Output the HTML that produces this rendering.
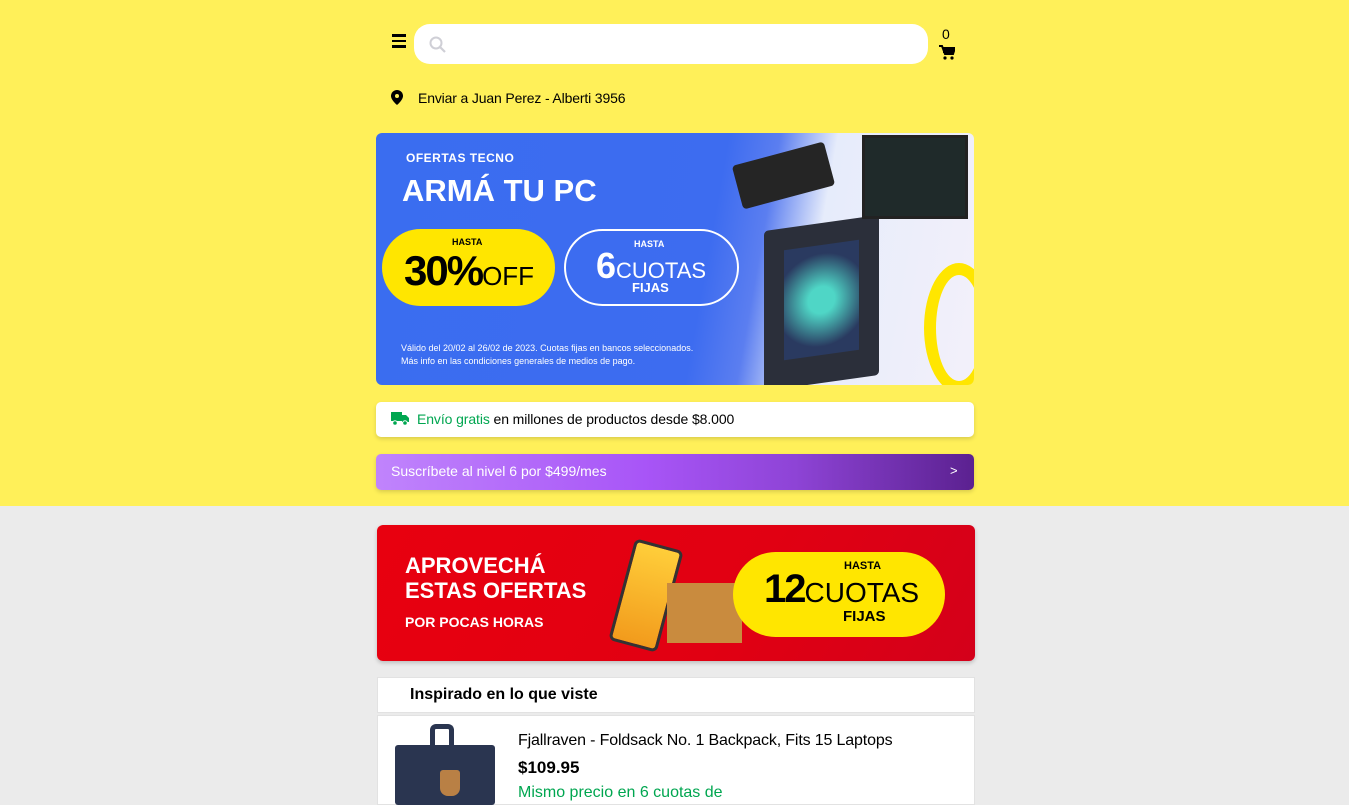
<!DOCTYPE html>
<html><head><meta charset="utf-8"><style>
*{box-sizing:border-box;margin:0;padding:0}
body{width:1349px;height:800px;overflow:hidden;background:#ebebeb;font-family:"Liberation Sans",sans-serif;position:relative}
.top{position:absolute;left:0;top:0;width:1349px;height:506px;background:#fff059}
.abs{position:absolute}
</style></head><body>
<div class="top"></div>
<div class="abs" style="left:392px;top:34px;width:14px;height:2.5px;background:#000"></div>
<div class="abs" style="left:392px;top:39.5px;width:14px;height:2.5px;background:#000"></div>
<div class="abs" style="left:392px;top:45px;width:14px;height:2.5px;background:#000"></div>
<div class="abs" style="left:414px;top:24px;width:514px;height:40px;background:#fff;border-radius:16px"></div>
<svg class="abs" style="left:428px;top:35px" width="20" height="20" viewBox="0 0 20 20"><circle cx="8" cy="8" r="5.5" fill="none" stroke="#cfcfd6" stroke-width="2"/><line x1="12" y1="12" x2="17" y2="17" stroke="#cfcfd6" stroke-width="2.2"/></svg>
<div class="abs" style="left:942px;top:26px;font-size:14px">0</div>
<svg class="abs" style="left:939px;top:45px" width="16" height="15" viewBox="0 0 16 15"><path d="M0 1h3l3 8h8l2-6H4" fill="none" stroke="#000" stroke-width="2"/><rect x="4" y="3" width="11" height="5" fill="#000"/><circle cx="6" cy="13" r="1.6"/><circle cx="13" cy="13" r="1.6"/></svg>
<svg class="abs" style="left:391px;top:90px" width="12" height="15" viewBox="0 0 12 15"><path d="M6 0a6 6 0 0 0-6 6c0 4 6 9 6 9s6-5 6-9a6 6 0 0 0-6-6z" fill="#000"/><circle cx="6" cy="6" r="2" fill="#fff059"/></svg>
<div class="abs" style="left:418px;top:90px;font-size:14px;letter-spacing:-.15px">Enviar a Juan Perez - Alberti 3956</div>
<div class="abs" style="left:376px;top:133px;width:598px;height:252px;border-radius:6px;overflow:hidden;background:linear-gradient(100deg,#3a6df0 0%,#3d6cf0 55%,#5b7ef0 63%,#e6ecfb 72%,#f3f0fa 100%)">
 <div class="abs" style="left:30px;top:18px;color:#fff;font-weight:bold;font-size:12px;letter-spacing:.5px">OFERTAS TECNO</div>
 <div class="abs" style="left:26px;top:40px;color:#fff;font-weight:bold;font-size:31px">ARMÁ <span style="font-weight:900">TU PC</span></div>
 <div class="abs" style="left:6px;top:96px;width:173px;height:77px;border-radius:40px;background:#ffe600"></div>
 <div class="abs" style="left:76px;top:104px;font-size:9px;font-weight:bold">HASTA</div>
 <div class="abs" style="left:28px;top:114px;font-size:42px;font-weight:bold;letter-spacing:-2px">30%<span style="font-weight:normal;font-size:26px;letter-spacing:0">OFF</span></div>
 <div class="abs" style="left:188px;top:96px;width:175px;height:77px;border-radius:40px;border:2px solid #fff"></div>
 <div class="abs" style="left:258px;top:106px;font-size:9px;font-weight:bold;color:#fff">HASTA</div>
 <div class="abs" style="left:220px;top:112px;font-size:36px;font-weight:bold;color:#fff">6<span style="font-weight:normal;font-size:22px">CUOTAS</span></div>
 <div class="abs" style="left:256px;top:147px;font-size:13px;font-weight:bold;color:#fff">FIJAS</div>
 <div class="abs" style="left:25px;top:209px;font-size:9px;color:#fff;line-height:13px">Válido del 20/02 al 26/02 de 2023. Cuotas fijas en bancos seleccionados.<br>Más info en las condiciones generales de medios de pago.</div>
 <div class="abs" style="left:388px;top:90px;width:115px;height:160px;background:#2b2f3a;transform:skewY(-8deg);border-radius:4px"></div>
 <div class="abs" style="left:408px;top:112px;width:75px;height:110px;background:radial-gradient(circle,#4fd6c6 20%,#2a3a60 70%);transform:skewY(-8deg)"></div>
 <div class="abs" style="left:486px;top:2px;width:106px;height:84px;background:#1f2a2a;border:3px solid #222"></div>
 <div class="abs" style="left:360px;top:20px;width:95px;height:45px;background:#252525;transform:rotate(-15deg);border-radius:4px"></div>
 <div class="abs" style="left:548px;top:130px;width:70px;height:130px;border-radius:50%;border:12px solid #ffe600"></div>
</div>
<div class="abs" style="left:376px;top:402px;width:598px;height:35px;background:#fff;border-radius:5px;box-shadow:0 2px 4px rgba(0,0,0,.15)"></div>
<svg class="abs" style="left:391px;top:411px" width="18" height="15" viewBox="0 0 18 15"><rect x="0" y="1" width="11" height="9" fill="#00a650"/><path d="M11 4h4l3 3v4h-7z" fill="#00a650"/><circle cx="4" cy="12" r="2.3" fill="#00a650" stroke="#fff"/><circle cx="14" cy="12" r="2.3" fill="#00a650" stroke="#fff"/></svg>
<div class="abs" style="left:417px;top:411px;font-size:14px;letter-spacing:-.1px"><span style="color:#00a650">Envío gratis</span> en millones de productos desde $8.000</div>
<div class="abs" style="left:376px;top:454px;width:598px;height:36px;border-radius:5px;background:linear-gradient(90deg,#c084fc 0%,#a855f7 45%,#8e44d6 70%,#5b2190 100%);box-shadow:0 2px 4px rgba(0,0,0,.15)"></div>
<div class="abs" style="left:391px;top:463px;font-size:14px;color:#fff">Suscríbete al nivel 6 por $499/mes</div>
<div class="abs" style="left:950px;top:463px;font-size:13px;color:#fff">&gt;</div>
<div class="abs" style="left:377px;top:525px;width:598px;height:136px;border-radius:6px;overflow:hidden;background:linear-gradient(120deg,#e8000f,#e10012 60%,#d4001a);box-shadow:0 2px 4px rgba(0,0,0,.2)">
 <div class="abs" style="left:28px;top:28px;color:#fff;font-weight:bold;font-size:22px;line-height:25px">APROVECHÁ<br>ESTAS <span style="font-weight:900">OFERTAS</span></div>
 <div class="abs" style="left:28px;top:89px;color:#fff;font-weight:bold;font-size:14px">POR POCAS HORAS</div>
 <div class="abs" style="left:244px;top:18px;width:50px;height:105px;border-radius:6px;background:linear-gradient(#ffce3a,#f29b1c);border:3px solid #333;transform:rotate(15deg)"></div>
 <div class="abs" style="left:290px;top:58px;width:75px;height:60px;background:#c98b3e"></div>
 <div class="abs" style="left:356px;top:27px;width:212px;height:85px;border-radius:43px;background:#ffe600"></div>
 <div class="abs" style="left:467px;top:35px;font-size:11px;font-weight:bold">HASTA</div>
 <div class="abs" style="left:387px;top:42px;font-size:40px;font-weight:bold;letter-spacing:-2px">12<span style="font-weight:normal;font-size:28px;letter-spacing:0">CUOTAS</span></div>
 <div class="abs" style="left:466px;top:83px;font-size:15px;font-weight:bold">FIJAS</div>
</div>
<div class="abs" style="left:377px;top:677px;width:598px;height:36px;background:#fff;border:1px solid #e2e2e2"></div>
<div class="abs" style="left:410px;top:686px;font-size:16px;font-weight:bold">Inspirado en lo que viste</div>
<div class="abs" style="left:377px;top:715px;width:598px;height:90px;background:#fff;border:1px solid #e2e2e2"></div>
<div class="abs" style="left:395px;top:745px;width:100px;height:60px;background:#2a3550;border-radius:3px"></div>
<div class="abs" style="left:430px;top:724px;width:24px;height:24px;border:5px solid #2a3550;border-bottom:none;border-radius:6px 6px 0 0"></div>
<div class="abs" style="left:440px;top:770px;width:20px;height:26px;background:#b98045;border-radius:3px 3px 8px 8px"></div>
<div class="abs" style="left:518px;top:732px;font-size:16px;letter-spacing:-.15px">Fjallraven - Foldsack No. 1 Backpack, Fits 15 Laptops</div>
<div class="abs" style="left:518px;top:758px;font-size:17px;font-weight:bold">$109.95</div>
<div class="abs" style="left:518px;top:784px;font-size:16px;color:#00a650">Mismo precio en 6 cuotas de</div>
</body></html>
